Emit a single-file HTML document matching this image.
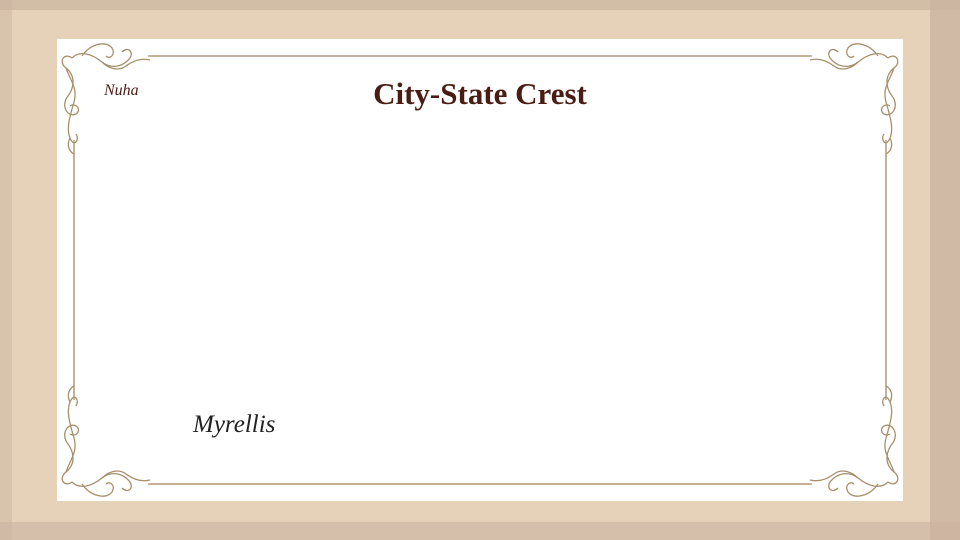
<!DOCTYPE html>
<html><head><meta charset="utf-8"><style>
html,body{margin:0;padding:0}
body{width:960px;height:540px;position:relative;overflow:hidden;background:#e5d2b8;font-family:"Liberation Serif",serif}
.edge{position:absolute;background:#cbb3a0}
#panel{position:absolute;left:57px;top:39px;width:846px;height:462px;background:#fff}
.t{position:absolute;color:#4a1b14}
</style></head><body>
<div class="edge" style="left:0;top:0;width:960px;height:10px;opacity:.7"></div>
<div class="edge" style="left:0;top:0;width:12px;height:540px;opacity:.5"></div>
<div class="edge" style="right:0;top:0;width:30px;height:540px;opacity:.8"></div>
<div class="edge" style="left:0;bottom:0;width:960px;height:18px;opacity:.6"></div>
<div id="panel"></div>
<svg width="960" height="540" style="position:absolute;left:0;top:0">
<defs>
<g id="c" fill="none" stroke="#a88f6c" stroke-width="1.3">
<path d="M0,0 C-8,-6 -14,4 -6,10 C4,18 2,30 -4,38 C-12,48 -4,60 4,56 C10,52 4,44 -2,48"/>
<path d="M-6,10 C-2,22 6,30 2,44 C-2,58 -6,70 -2,80 C2,90 8,82 4,76"/>
<path d="M0,0 C8,-8 20,-4 30,4 C40,12 52,8 58,0 C62,-6 56,-12 50,-6"/>
<path d="M10,-2 C18,-14 34,-18 40,-10 C44,-4 38,2 34,-2"/>
<path d="M30,4 C36,10 46,14 54,8 C62,2 70,0 78,2"/>
<path d="M-2,80 C-6,88 -2,94 2,96"/>
</g>
</defs>
<rect x="74" y="56" width="812" height="428" fill="none" stroke="#a88f6c" stroke-width="1.2"/>
<rect x="60" y="42" width="90" height="100" fill="#fff"/>
<rect x="810" y="42" width="90" height="100" fill="#fff"/>
<rect x="60" y="398" width="90" height="100" fill="#fff"/>
<rect x="810" y="398" width="90" height="100" fill="#fff"/>
<line x1="148" y1="56" x2="812" y2="56" stroke="#a88f6c" stroke-width="1.2"/>
<line x1="148" y1="484" x2="812" y2="484" stroke="#a88f6c" stroke-width="1.2"/>
<line x1="74" y1="140" x2="74" y2="400" stroke="#a88f6c" stroke-width="1.2"/>
<line x1="886" y1="140" x2="886" y2="400" stroke="#a88f6c" stroke-width="1.2"/>
<use href="#c" transform="translate(72,58)"/>
<use href="#c" transform="translate(888,58) scale(-1,1)"/>
<use href="#c" transform="translate(72,482) scale(1,-1)"/>
<use href="#c" transform="translate(888,482) scale(-1,-1)"/>
</svg>
<div class="t" style="left:104px;top:82px;font-size:16px;font-style:italic">Nuha</div>
<div class="t" style="left:0;width:960px;text-align:center;top:76px;font-size:31px;font-weight:bold;color:#4a1d14">City-State Crest</div>
<div class="t" style="left:193px;top:411px;font-size:25px;font-style:italic;color:#222">Myrellis</div>
</body></html>
